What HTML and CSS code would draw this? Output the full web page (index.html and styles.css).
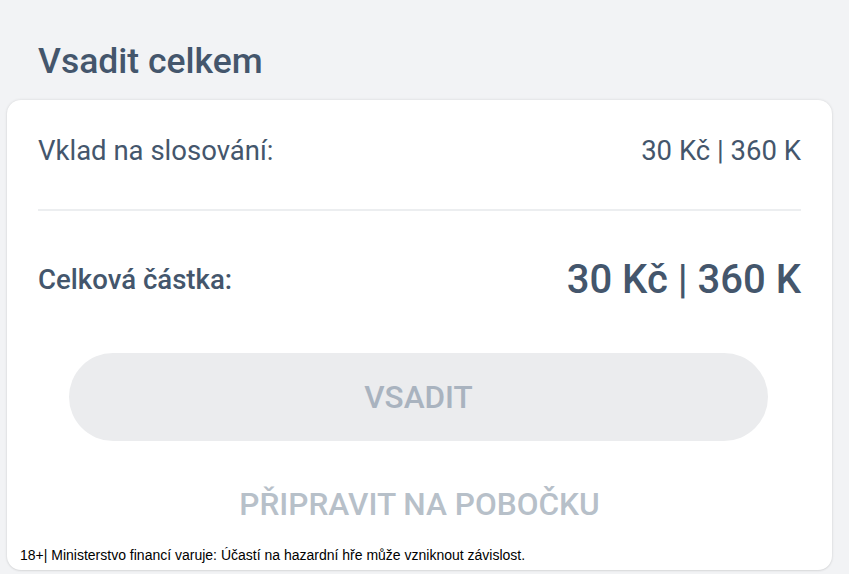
FILE: index.html
```html
<!DOCTYPE html>
<html lang="cs">
<head>
<meta charset="utf-8">
<title>Vsadit celkem</title>
<link rel="stylesheet" href="styles.css">
</head>
<body>
<div class="page">
  <h1 class="title">Vsadit celkem</h1>
  <section class="card">
    <div class="row row-deposit">
      <span class="label">Vklad na slosování:</span>
      <span class="value">30 Kč | 360 K</span>
    </div>
    <div class="divider"></div>
    <div class="row row-total">
      <span class="label label-total">Celková částka:</span>
      <span class="value value-total">30 Kč | 360 K</span>
    </div>
    <button class="bet-btn" type="button" disabled>VSADIT</button>
    <div class="branch-link">PŘIPRAVIT NA POBOČKU</div>
    <p class="warning">18+| Ministerstvo financí varuje: Účastí na hazardní hře může vzniknout závislost.</p>
  </section>
</div>
</body>
</html>
```

FILE: styles.css
```css
* { box-sizing: border-box; }
html, body { margin: 0; padding: 0; }
body {
  background: #f2f3f5;
  font-family: Roboto, "Noto Sans", sans-serif;
  color: #44566c;
  width: 849px;
  height: 574px;
  overflow: hidden;
}
.page {
  padding: 0 17px 0 7px;
}
.title {
  margin: 0;
  padding: 41px 0 0 31px;
  height: 100px;
  font-size: 35.5px;
  line-height: 40px;
  font-weight: 500;
  color: #44566c;
}
.card {
  background: #ffffff;
  border-radius: 14px;
  box-shadow: 0 0 3px rgba(0, 0, 0, 0.12), 0 1px 2px rgba(0, 0, 0, 0.06);
  padding: 0 31px 7px 31px;
  height: 470px;
}
.row {
  display: flex;
  justify-content: space-between;
  align-items: center;
}
.row-deposit {
  padding: 33px 0 40px;
  height: 109px;
  font-size: 27.5px;
  line-height: 36px;
}
.divider {
  height: 2px;
  background: #eceef0;
}
.row-total {
  margin-top: 46px;
  height: 44px;
}
.label-total {
  font-size: 27.6px;
  font-weight: 500;
}
.value-total {
  font-size: 40px;
  font-weight: 500;
}
.bet-btn {
  display: block;
  margin: 52px 33px 0 31px;
  width: calc(100% - 64px);
  height: 88px;
  border: none;
  border-radius: 44px;
  background: #ebecee;
  color: #a9b3bf;
  font-family: Roboto, "Noto Sans", sans-serif;
  font-size: 31.5px;
  font-weight: 500;
  padding: 0;
}
.branch-link {
  margin-top: 44px;
  height: 40px;
  line-height: 40px;
  text-align: center;
  font-size: 31.6px;
  font-weight: 500;
  color: #b7c0c9;
}
.warning {
  margin: 22px 0 0 -18px;
  font-family: "Liberation Sans", Arial, sans-serif;
  font-size: 14px;
  line-height: 16px;
  color: #000;
}
```
